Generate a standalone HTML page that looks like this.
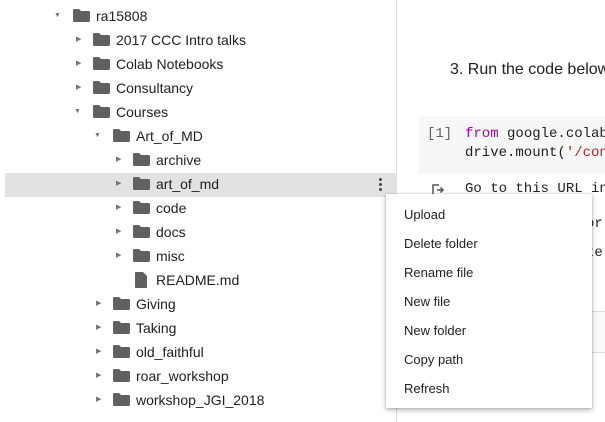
<!DOCTYPE html>
<html style="margin:0;height:422px;overflow:hidden"><head><style>
body{margin:0;width:605px;height:422px;overflow:hidden;background:#fff;font-family:"Liberation Sans",sans-serif;position:relative;color:#212121}
.row{position:absolute;height:24px;left:0;width:396px;font-size:14px;line-height:24px}
.arr{position:absolute;top:0;font-size:7px;color:#757575;line-height:24px}
.fold{position:absolute;top:5px;width:17px;height:13px}
.t{position:absolute;top:0}
.side{position:absolute;left:396px;top:0;width:1px;height:422px;background:#e0e0e0}
.mono{font-family:"Liberation Mono",monospace;font-size:14px;position:absolute;white-space:pre;color:#212121}
.menu{position:absolute;left:386px;top:194px;width:206px;height:214px;background:#fff;box-shadow:0 2px 5px rgba(0,0,0,.3),0 0 2px rgba(0,0,0,.15)}
.mi{position:absolute;left:18px;font-size:13px;color:#212121}
</style></head><body>
<div class="side"></div>
<div style="position:absolute;left:5px;top:173px;width:391px;height:24px;background:#e2e2e2"></div>
<div style="position:absolute;left:379px;top:177px;width:4px;height:16px">
<div style="width:3px;height:3px;border-radius:50%;background:#444;margin:1px 0 2px"></div><div style="width:3px;height:3px;border-radius:50%;background:#444;margin-bottom:2px"></div><div style="width:3px;height:3px;border-radius:50%;background:#444"></div></div>

<svg width="0" height="0" style="position:absolute"><defs><symbol id="f" viewBox="0 0 17 13"><path d="M0 1.5Q0 0 1.5 0H6L8 2H15.5Q17 2 17 3.5V11.5Q17 13 15.5 13H1.5Q0 13 0 11.5Z" fill="#616161"/></symbol></defs></svg>

<div id="tree"></div>
<script>
const rows=[[0,'ra15808','d'],[1,'2017 CCC Intro talks','r'],[1,'Colab Notebooks','r'],[1,'Consultancy','r'],[1,'Courses','d'],[2,'Art_of_MD','d'],[3,'archive','r'],[3,'art_of_md','r'],[3,'code','r'],[3,'docs','r'],[3,'misc','r'],[3,'README.md','f'],[2,'Giving','r'],[2,'Taking','r'],[2,'old_faithful','r'],[2,'roar_workshop','r'],[2,'workshop_JGI_2018','r'],[1,'DUFR','r']];
let h='';
h+='<div class="row" style="top:-20px"><svg class="fold" style="left:72px" ><use href="#f"/></svg></div>';
rows.forEach((r,i)=>{const y=4+i*24+(i==17?8:0);const ax=56+r[0]*20,fx=73+r[0]*20,tx=96+r[0]*20;
let a=r[2]=='d'?'<span class="arr" style="left:'+(ax-2)+'px">&#9660;</span>':r[2]=='r'?'<span class="arr" style="left:'+ax+'px">&#9654;</span>':'';
let ic=r[2]=='f'?'<svg class="fold" style="left:'+(fx+2)+'px;top:4px;width:12px;height:16px" viewBox="0 0 12 16"><path d="M0 1Q0 0 1 0H8L12 4V15Q12 16 11 16H1Q0 16 0 15Z" fill="#616161"/></svg>':'<svg class="fold" style="left:'+fx+'px"><use href="#f"/></svg>';
h+='<div class="row" style="top:'+y+'px">'+a+ic+'<span class="t" style="left:'+tx+'px">'+r[1]+'</span></div>';});
document.getElementById('tree').innerHTML=h;
</script>

<div style="position:absolute;left:450px;top:61px;font-size:16px;white-space:nowrap">3. Run the code below</div>
<div style="position:absolute;left:419px;top:116px;width:186px;height:58px;background:#f7f7f7"></div>
<div class="mono" style="left:427px;top:126px;color:#616161">[1]</div>
<div class="mono" style="left:465px;top:126px"><span style="color:#a0a">from</span> google.colab</div>
<div class="mono" style="left:465px;top:145px">drive.mount(<span style="color:#b22">'/content</span></div>
<svg style="position:absolute;left:431px;top:183px" width="14" height="14" viewBox="0 0 14 14"><path d="M8 2H2V12H8" fill="none" stroke="#555" stroke-width="1.5"/><path d="M6 7H12M9.5 4.5L12 7L9.5 9.5" fill="none" stroke="#555" stroke-width="1.5"/></svg>
<div class="mono" style="left:465px;top:181px">Go to this URL in</div>
<div class="mono" style="left:586px;top:216px">or</div>
<div class="mono" style="left:586px;top:245px">te</div>
<div style="position:absolute;left:590px;top:311px;width:15px;height:40px;border-top:1px solid #ddd;border-bottom:1px solid #ddd;background:#fafafa"></div>

<div class="menu">
<div class="mi" style="top:13px">Upload</div>
<div class="mi" style="top:42px">Delete folder</div>
<div class="mi" style="top:71px">Rename file</div>
<div class="mi" style="top:100px">New file</div>
<div class="mi" style="top:129px">New folder</div>
<div class="mi" style="top:158px">Copy path</div>
<div class="mi" style="top:187px">Refresh</div>
</div>
</body></html>
